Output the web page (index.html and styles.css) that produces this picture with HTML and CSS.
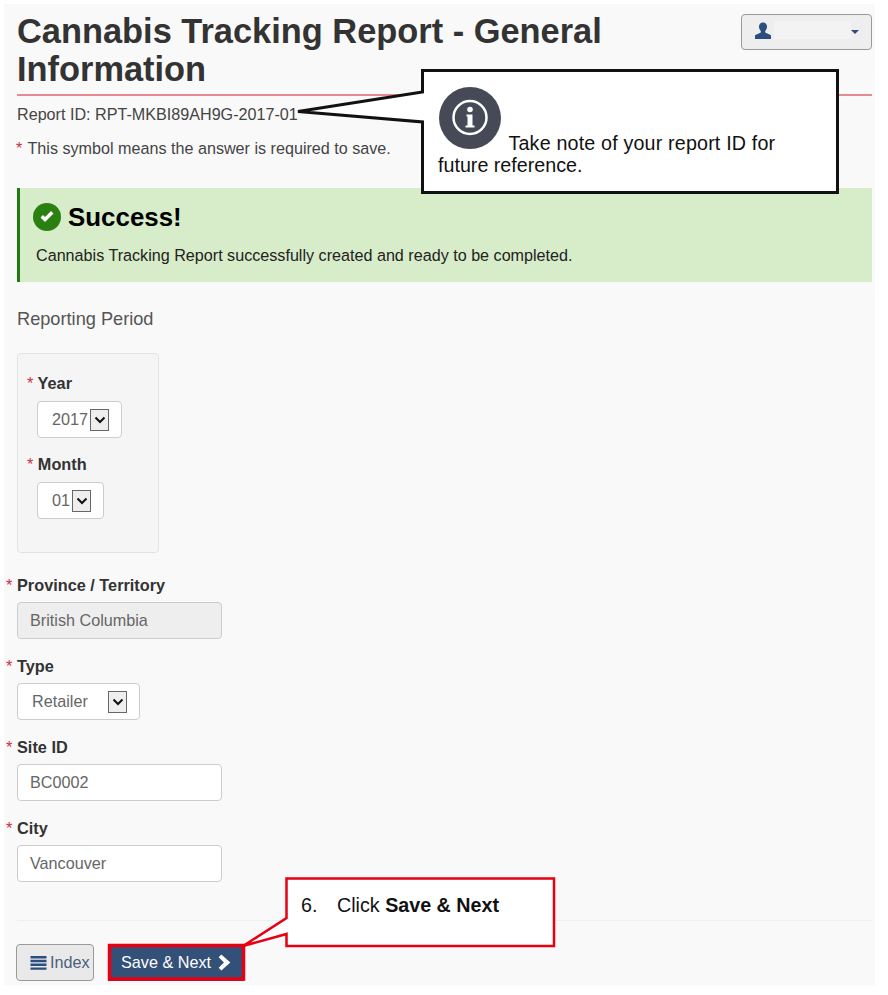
FILE: index.html
```html
<!DOCTYPE html>
<html lang="en">
<head>
<meta charset="utf-8">
<title>Cannabis Tracking Report - General Information</title>
<link rel="stylesheet" href="styles.css">
</head>
<body>
<main class="page">
  <header class="head">
    <h1 class="title">Cannabis Tracking Report - General Information</h1>
    <button class="user-btn" type="button">
      <svg class="user-icon" viewBox="0 0 18 18" width="18" height="18"><path d="M9 0.500c-2.600 0-4 1.900-4 4.300 0 1.700.7 3.200 1.800 4.200v1.600L1 13.200V17h16v-3.800l-5.800-2.600V9c1.100-1 1.800-2.500 1.800-4.200C13 2.400 11.600.5 9 .5z" fill="#2b4f7c"/></svg>
      <span class="user-name"></span>
      <span class="caret"></span>
    </button>
  </header>
  <p class="report-id">Report ID: RPT-MKBI89AH9G-2017-01</p>
  <p class="legend"><span class="req legend-star">*</span> This symbol means the answer is required to save.</p>

  <section class="alert">
    <h2 class="alert-title">
      <svg viewBox="0 0 28 28" width="28" height="28"><circle cx="14" cy="14" r="14" fill="#2a8010"/><path d="M7.500 14.500l4.500 4.500 8.500-8.500-2.500-2.500-6 6-2-2z" fill="#fff"/></svg>
      Success!
    </h2>
    <p class="alert-text">Cannabis Tracking Report successfully created and ready to be completed.</p>
  </section>

  <h3 class="period-title">Reporting Period</h3>
  <div class="period">
    <div class="field">
      <label class="label"><span class="req">*</span> Year</label>
      <div class="select sel-year">2017<span class="arrow"><svg viewBox="0 0 12 8" width="12" height="8"><path d="M1.500 1.500L6 6l4.500-4.500" fill="none" stroke="#111" stroke-width="2"/></svg></span></div>
    </div>
    <div class="field">
      <label class="label"><span class="req">*</span> Month</label>
      <div class="select sel-month">01<span class="arrow"><svg viewBox="0 0 12 8" width="12" height="8"><path d="M1.500 1.500L6 6l4.500-4.500" fill="none" stroke="#111" stroke-width="2"/></svg></span></div>
    </div>
  </div>

  <div class="form">
    <div class="row">
      <label class="label"><span class="req out">*</span>Province / Territory</label>
      <div class="input disabled">British Columbia</div>
    </div>
    <div class="row">
      <label class="label"><span class="req out">*</span>Type</label>
      <div class="select sel-type">Retailer<span class="arrow"><svg viewBox="0 0 12 8" width="12" height="8"><path d="M1.500 1.500L6 6l4.500-4.500" fill="none" stroke="#111" stroke-width="2"/></svg></span></div>
    </div>
    <div class="row">
      <label class="label"><span class="req out">*</span>Site ID</label>
      <div class="input">BC0002</div>
    </div>
    <div class="row">
      <label class="label"><span class="req out">*</span>City</label>
      <div class="input">Vancouver</div>
    </div>
  </div>

  <hr class="rule">
  <div class="actions">
    <button class="btn btn-index" type="button">
      <svg viewBox="0 0 16 14" width="17" height="14"><path d="M0 0h16v2.400H0zM0 3.800h16v2.400H0zM0 7.600h16V10H0zM0 11.400h16v2.400H0z" fill="#2b4f7c"/></svg>Index
    </button>
    <button class="btn btn-save" type="button">Save &amp; Next
      <svg viewBox="0 0 12 16" width="13" height="17"><path d="M3 0.500L11.500 8 3 15.500 0.500 13 5.500 8 0.500 3z" fill="#fff"/></svg>
    </button>
  </div>
</main>

<svg class="callout-shapes" width="888" height="995" viewBox="0 0 888 995">
  <path d="M422.500 70.500H837.500V192.500H422.500V122L298 111.500L422.500 92z" fill="#fff" stroke="#111" stroke-width="3"/>
  <path d="M286.500 878.500H554V946H286.500V934L243 946L286.500 918z" fill="#fff" stroke="#e60012" stroke-width="2.500"/>
  <rect x="109.500" y="945.500" width="134" height="33.500" fill="none" stroke="#e60012" stroke-width="3.500"/>
</svg>
<aside class="note note-id">
  <svg class="info" viewBox="0 0 62 62" width="62" height="62"><circle cx="31" cy="31" r="31" fill="#454a56"/><circle cx="31" cy="30.500" r="16.500" fill="none" stroke="#fff" stroke-width="2.500"/><circle cx="31" cy="22.500" r="2.800" fill="#fff"/><path d="M27.500 27.500h6v11h2v2h-9v-2h2v-9h-1z" fill="#fff"/></svg>
  <span class="note-first">Take note of your report ID for</span> future reference.
</aside>
<aside class="note note-step"><span class="step-num">6.</span>Click <b>Save &amp; Next</b></aside>
</body>
</html>
```
FILE: styles.css
```css
* { box-sizing: border-box; }
html, body { margin: 0; padding: 0; background: #fff; }
body { width: 888px; height: 995px; overflow: hidden; position: relative; font-family: "Liberation Sans", Arial, sans-serif; color: #333; }

.page { margin: 4px 13px 0 4px; height: 981px; padding: 8px 3px 0 13px; background: #f9f9f9; }

.head { display: flex; justify-content: space-between; align-items: flex-start; height: 84px; border-bottom: 2px solid #e58a94; }
.title { margin: 0; width: 640px; font-size: 34.400px; line-height: 38px; font-weight: 700; color: #333; }
.user-btn { display: flex; align-items: center; flex: none; width: 131px; height: 36px; margin-top: 2px; padding: 0 12px; background: #eee; border: 1px solid #999; border-radius: 4px; }
.user-icon { flex: none; margin-right: 2px; margin-top: -3px; }
.user-name { flex: 1; height: 18px; margin: 0 0 4px 0; background: #f3f3f3; }
.caret { flex: none; width: 0; height: 0; border-left: 4px solid transparent; border-right: 4px solid transparent; border-top: 4px solid #2b4f7c; }

.report-id { margin: 8px 0 0; font-size: 16.150px; line-height: 20px; color: #444; }
.legend { margin: 14px 0 0 -1px; font-size: 16.150px; line-height: 20px; color: #444; }
.legend-star { margin-right: 1px; }
.req { color: #c9304a; }
.out { position: absolute; margin-left: -11px; }

.alert { height: 94px; margin-top: 30px; padding: 13px 16px 0 16px; background: #d7ecc8; border-left: 3px solid #1f7a10; color: #222; }
.alert-title { display: flex; align-items: center; gap: 7px; margin: 0; height: 32px; margin-left: -3px; font-size: 25.900px; font-weight: 700; color: #000; }
.alert-text { margin: 12px 0 0; font-size: 16.150px; line-height: 20px; }

.period-title { margin: 26px 0 0; font-size: 18.200px; line-height: 22px; font-weight: 400; color: #555; }
.period { width: 142px; height: 200px; margin-top: 23px; padding: 19px 9px 0; background: #f5f5f5; border: 1px solid #e3e3e3; border-radius: 4px; }
.field { height: 81px; }

.label { display: block; height: 20px; font-size: 16.300px; line-height: 20px; font-weight: 700; color: #333; }
.label .req { font-weight: 400; }

.select { display: flex; align-items: center; height: 37px; margin-top: 8px; font-size: 16.200px; color: #666; background: #fff; border: 1px solid #ccc; border-radius: 4px; }
.field .select { gap: 2px; margin-left: 10px; padding-left: 14px; }
.sel-year { width: 85px; }
.sel-month { width: 67px; }
.sel-type { width: 123px; margin-top: 7px; padding-left: 14px; justify-content: space-between; padding-right: 12px; }
.arrow { display: flex; align-items: center; justify-content: center; flex: none; width: 19px; height: 22px; background: #eee; border: 1px solid #666; }

.form { margin-top: 22px; }
.row { height: 81px; }
.input { width: 205px; height: 37px; margin-top: 7px; padding-left: 12px; font-size: 16.200px; line-height: 35px; color: #666; background: #fff; border: 1px solid #ccc; border-radius: 4px; }
.input.disabled { background: #eee; }

.rule { height: 1px; margin: 21px 0 0; border: 0; background: #eee; }
.actions { display: flex; gap: 14px; margin-top: 23px; margin-left: -1px; }
.btn { display: flex; align-items: center; height: 37px; font-family: inherit; font-size: 16.200px; border-radius: 4px; padding: 0; }
.btn-index { width: 78px; padding-left: 13px; gap: 3px; color: #4a5f7d; background: #e9e9e9; border: 1px solid #999; }
.btn-save { width: 136px; justify-content: center; gap: 7px; color: #fff; background: #335079; border: 0; border-radius: 0; }

.callout-shapes { position: absolute; left: 0; top: 0; pointer-events: none; }

.note { position: absolute; color: #111; font-size: 19.700px; }
.note-id { left: 438px; top: 87px; width: 380px; line-height: 22px; }
.info { display: inline-block; vertical-align: 1px; margin: 0 2px 0 1px; }
.note-first { letter-spacing: 0.170px; }
.note-step { left: 301px; top: 893px; line-height: 24px; }
.step-num { display: inline-block; width: 36px; }
```
